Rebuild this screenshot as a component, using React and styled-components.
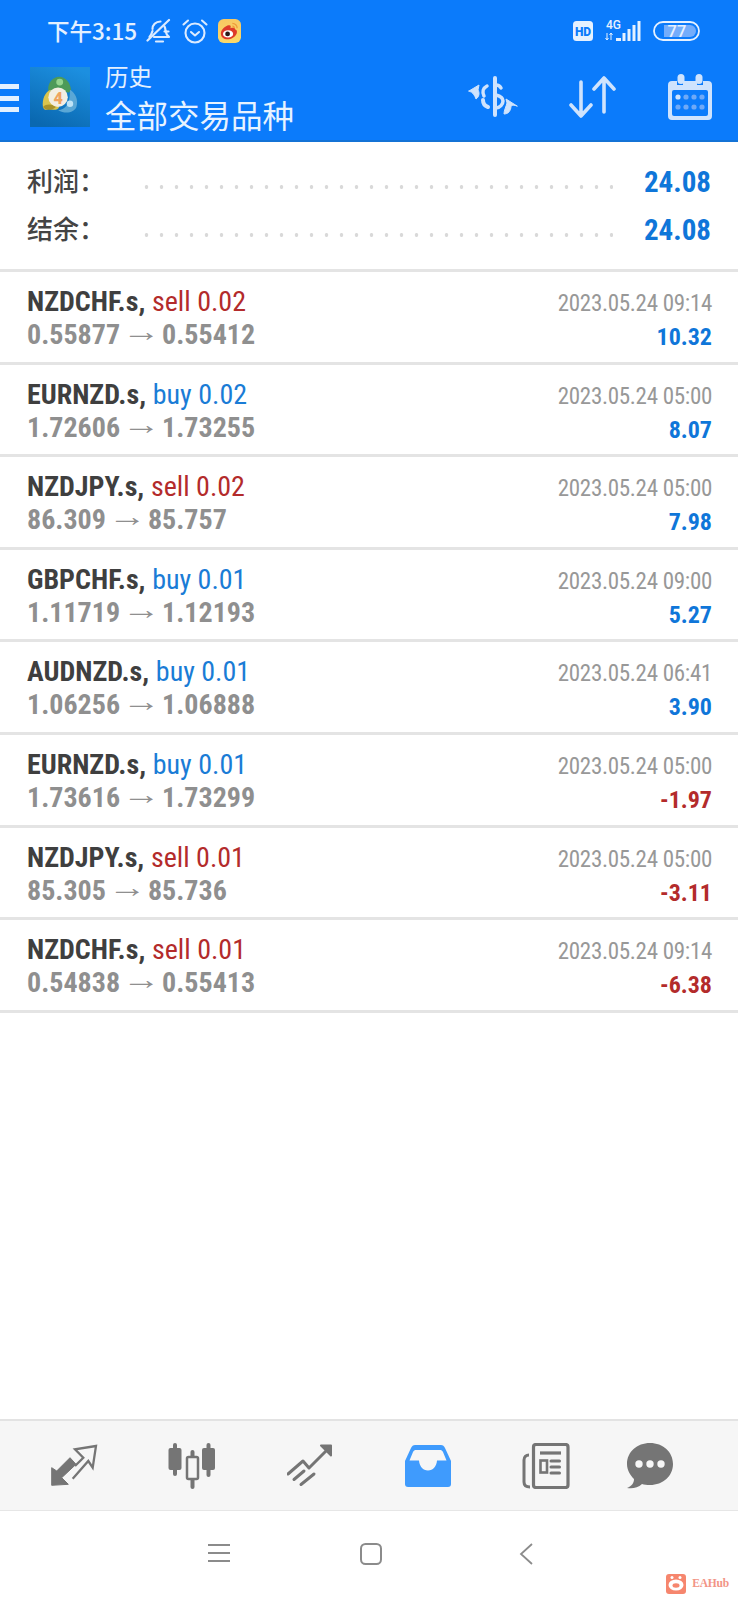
import React from "react";
import styled, { createGlobalStyle } from "styled-components";

const Global = createGlobalStyle`
  html, body { margin: 0; padding: 0; background: #fff; }
  #root { width: 738px; height: 1600px; }
`;
const CJK = `"Noto Sans CJK SC", Roboto, sans-serif`;
const RC = `Roboto, "Noto Sans CJK SC", sans-serif`;

const Page = styled.div`
  width: 738px; height: 1600px; display: flex; flex-direction: column; overflow: hidden; background: #fff;
`;
const Header = styled.header`
  background: #0b7bfb; height: 142px; flex: none; display: flex; flex-direction: column;
  border-bottom: 2px solid #1473d6; box-sizing: border-box; color: #fff;
`;
const Status = styled.div`
  height: 61px; flex: none; display: flex; align-items: center; padding: 0 38px 0 47px;
`;
const Time = styled.span`
  font: 500 22.5px/1 ${CJK}; color: #e3f0ff; margin-right: 9px;
`;
const StatusGroup = styled.div`
  display: flex; align-items: center; gap: ${p => p.$gap || 10}px;
`;
const Spacer = styled.div`flex: 1;`;
const Toolbar = styled.div`
  flex: 1; display: flex; align-items: center; padding-bottom: 9px;
`;
const Burger = styled.div`
  width: 19px; height: 28px; display: flex; flex-direction: column; justify-content: space-between; margin-right: 11px; margin-top: 2px;
  i { display: block; height: 5px; background: #e3f0ff; }
`;
const Titles = styled.div`
  margin-left: 15px; display: flex; flex-direction: column; gap: 4px;
`;
const Sub = styled.div`font: 400 23.5px/30px ${CJK}; color: #e3f0ff;`;
const Title = styled.div`font: 400 31.5px/38px ${CJK}; color: #e8f3ff;`;
const Actions = styled.div`
  margin-left: auto; display: flex; align-items: center; gap: 51px; padding-right: 26px;
`;

const Summary = styled.section`
  flex: none; height: 130px; box-sizing: border-box; padding: 20px 27px 0; border-bottom: 3px solid #e4e4e4; display: flex; flex-direction: column; gap: 8px;
`;
const SumRow = styled.div`
  height: 40px; display: flex; align-items: center;
`;
const SumLabel = styled.span`
  font: 500 26px/1 ${CJK}; color: #444; width: 117px; margin-right: -5px; margin-top: -4px; flex: none; white-space: nowrap;
`;
const Dots = styled.div`
  width: 474px; height: 4px; flex: none; margin-top: 9px;
  background-image: radial-gradient(circle, #d9d9d9 1.6px, transparent 2.1px);
  background-size: 15px 4px; background-repeat: repeat-x;
`;
const SumValue = styled.span`
  margin-left: auto; font: 700 29px/1 ${RC}; color: #0f76d9; font-stretch: 87%;
`;

const Row = styled.div`
  height: 92.6px; flex: none; box-sizing: border-box; border-bottom: 3px solid #e4e4e4;
  padding: 13px 26px 0 27px; display: flex; justify-content: space-between;
`;
const Col = styled.div`
  display: flex; flex-direction: column; align-items: ${p => p.$right ? "flex-end" : "flex-start"};
  margin-top: ${p => p.$right ? 2 : 0}px; gap: ${p => p.$right ? 1 : 0}px;
`;
const Line = styled.div`
  height: 33px; white-space: nowrap; font-family: ${RC}; font-stretch: 75%; line-height: 33px;
`;
const Symbol = styled.span`font-weight: 700; font-size: 28px; color: #3f3f3f; margin-right: 3px;`;
const Side = styled.span`
  font-weight: 400; font-size: 28px; color: ${p => p.$sell ? "#b32b2b" : "#1a7cd6"};
`;
const Price = styled.span`font-weight: 700; font-size: 28px; color: #8f8f8f;`;
const Arrow = styled.span`
  display: inline-block; font: 700 28px/1 "Liberation Sans", sans-serif; color: #8f8f8f;
  margin: 0 7px; transform: scaleX(1.38); vertical-align: 3px;
`;
const DateText = styled.span`font-weight: 400; font-size: 23px; letter-spacing: -0.3px; color: #989898;`;
const Profit = styled.span`
  font-weight: 700; font-size: 24px; color: ${p => p.$neg ? "#b32b2b" : "#0f76d9"};
`;

const Fill = styled.div`flex: 1;`;
const BottomNav = styled.nav`
  flex: none; height: 92px; box-sizing: border-box; background: #f6f6f6;
  border-top: 2px solid #e3e3e3; border-bottom: 1px solid #e6e6e6;
  display: flex; align-items: center; padding-left: 15px;
`;
const Slot = styled.div`
  width: ${p => p.$w || 118}px; flex: none; display: flex; justify-content: center; align-items: center; margin-left: ${p => p.$shift || 0}px;
`;
const SysNav = styled.div`
  flex: none; height: 89px; position: relative; display: flex; padding-left: 208px; align-items: flex-start;
  gap: 0; padding-top: 32px; box-sizing: border-box;
`;
const SysIcon = styled.div`
  width: ${p => p.$w}px; display: flex;
`;
const Mark = styled.div`
  position: absolute; right: 9px; bottom: 6px; display: flex; align-items: center; gap: 6px;
  font: 700 11.5px/1 "Liberation Serif", serif; letter-spacing: -0.2px; color: #f29486;
`;

const trades = [
  ["NZDCHF.s", "sell", "0.02", "0.55877", "0.55412", "2023.05.24 09:14", "10.32"],
  ["EURNZD.s", "buy", "0.02", "1.72606", "1.73255", "2023.05.24 05:00", "8.07"],
  ["NZDJPY.s", "sell", "0.02", "86.309", "85.757", "2023.05.24 05:00", "7.98"],
  ["GBPCHF.s", "buy", "0.01", "1.11719", "1.12193", "2023.05.24 09:00", "5.27"],
  ["AUDNZD.s", "buy", "0.01", "1.06256", "1.06888", "2023.05.24 06:41", "3.90"],
  ["EURNZD.s", "buy", "0.01", "1.73616", "1.73299", "2023.05.24 05:00", "-1.97"],
  ["NZDJPY.s", "sell", "0.01", "85.305", "85.736", "2023.05.24 05:00", "-3.11"],
  ["NZDCHF.s", "sell", "0.01", "0.54838", "0.55413", "2023.05.24 09:14", "-6.38"],
];

const BellOff = () => (
  <svg width="26" height="26" viewBox="0 0 26 26" fill="none" stroke="#dcebff" strokeWidth="2.200" strokeLinecap="round" strokeLinejoin="round">
    <path d="M8 19h15c-2-1.500-3-3.500-3.500-6.500 0-1.500-.5-3-1-4" />
    <path d="M18.500 13.500l4 0M6.500 13c-.5 2-1.500 4-3 6" />
    <path d="M6.500 11c0-4 3-7.500 8-7.500" />
    <path d="M10 23.500h7" /><path d="M1.500 22.500L23 2" />
  </svg>
);
const Alarm = () => (
  <svg width="26" height="26" viewBox="0 0 26 26" fill="none" stroke="#dcebff" strokeWidth="2.100" strokeLinecap="round" strokeLinejoin="round">
    <circle cx="13" cy="15" r="9.500" /><path d="M9 14l4 3.500 4-3.500" /><path d="M1.500 6.500L6 2.500" /><path d="M24.500 6.500L20 2.500" />
  </svg>
);
const Weibo = () => (
  <svg width="23" height="24" viewBox="0 0 24 25">
    <defs>
      <linearGradient id="wb" x1="0" y1="0" x2="0" y2="1"><stop offset="0" stopColor="#f8c862" /><stop offset="1" stopColor="#fad96a" /></linearGradient>
    </defs>
    <rect width="24" height="25" rx="6" fill="url(#wb)" />
    <path d="M3 15c0-4 5-8 8-8.500 2.500-.5 2.500 1 2 3 3-1 5-.5 5 1.500 2 .5 2 2.500 1.500 4-1.500 4-6 6-9.500 6-4 0-7-2-7-6z" fill="#dd3a2a" />
    <ellipse cx="10.500" cy="15.500" rx="5.300" ry="3.800" fill="#fff" />
    <circle cx="10" cy="15.500" r="2.500" fill="#2a1a18" />
    <path d="M15 4.500a5 5 0 0 1 5 5M15 7.500a2 2 0 0 1 2 2" stroke="#ee9a3a" strokeWidth="1.300" fill="none" />
  </svg>
);
const HD = () => (
  <svg width="20" height="20" viewBox="0 0 20 20">
    <rect width="20" height="20" rx="3.500" fill="#e6f1ff" />
    <text x="10" y="14.500" textAnchor="middle" fontFamily="Roboto, sans-serif" fontWeight="900" fontSize="12" fill="#0b7bfb">HD</text>
  </svg>
);
const Signal = () => (
  <svg width="38" height="30" viewBox="0 -4 38 30">
    <text x="2" y="9" fontFamily="Roboto, sans-serif" fontSize="12" fontWeight="500" fill="#e6f1ff">4G</text>
    <path d="M3 13v7M1.500 18l1.500 2 1.500-2M7 20v-7M5.500 15l1.500-2 1.500 2" stroke="#e6f1ff" strokeWidth="1" fill="none" />
    <rect x="12" y="18" width="5" height="3" fill="#e6f1ff" />
    <rect x="18.500" y="13" width="3" height="8" fill="#e6f1ff" />
    <rect x="23.500" y="9" width="3" height="12" fill="#e6f1ff" />
    <rect x="28.500" y="5" width="3" height="16" fill="#e6f1ff" />
    <rect x="33.500" y="1" width="3" height="20" fill="#e6f1ff" />
  </svg>
);
const Battery = () => (
  <svg width="47" height="20" viewBox="0 0 47 20">
    <rect x="1" y="1" width="45" height="18" rx="9" fill="none" stroke="#e6f1ff" strokeWidth="1.800" />
    <path d="M11 4h26a6 6 0 0 1 0 12H11z" fill="#74adfb" />
    <text x="24" y="16" textAnchor="middle" fontFamily="Roboto, sans-serif" fontWeight="500" fontSize="16.500" fill="#e6f1ff">77</text>
  </svg>
);
const Logo = () => (
  <svg width="60" height="60" viewBox="0 0 60 60">
    <defs>
      <linearGradient id="mtbg" x1="0.700" y1="0" x2="0.300" y2="1">
        <stop offset="0" stopColor="#1c8fe0" /><stop offset="1" stopColor="#0a68b0" />
      </linearGradient>
    </defs>
    <rect width="60" height="60" fill="url(#mtbg)" />
    <g transform="scale(1.08)">
      <path d="M17 22c-1-7 4-13 10-13s11 6 11 13c-2 2-3 2-5 1-4-2-8-2-11 0-2 1-4 1-5-1z" fill="#4d9a58" />
      <circle cx="27.500" cy="14" r="3.200" fill="#93d48e" />
      <path d="M19 21c-5 2-8 9-7 16 1 3 3 3 5 2 5 1 9 1 10-2-6-3-8-9-8-16z" fill="#d9c44d" />
      <path d="M12 37c3-3 8-3 12 0-3 3-9 4-12 0z" fill="#a8922a" />
      <path d="M37 21c5 3 8 9 6 16-2 5-10 7-17 3 7-1 11-5 11-19z" fill="#5aa7d6" />
      <circle cx="37" cy="34" r="3" fill="#bfe3f7" />
      <circle cx="26" cy="28" r="9" fill="#f3eee2" />
      <text x="26" y="34" textAnchor="middle" fontFamily="Roboto, sans-serif" fontWeight="900" fontSize="15" fill="#efa45f">4</text>
    </g>
  </svg>
);
const tc = "#cfe3fd";
const SwapDollar = () => (
  <svg width="50" height="42" viewBox="0 0 50 42" fill="none" stroke={tc} strokeLinecap="round">
    <path d="M27 2v37" strokeWidth="4" />
    <path d="M33 12c-1-2-3-3-5-3" strokeWidth="3.500" />
    <path d="M19 10c-4 2-5 6-3 10" strokeWidth="3.500" />
    <path d="M15 24c0 3 2 6 5 7" strokeWidth="4" />
    <path d="M28 19c4 1 7 3 7 6s-3 7-7 7" strokeWidth="3.500" />
    <path d="M1 15L11 9l-1 5c2 3 1 7-2 9-1-3-3-7-7-8z" fill={tc} stroke={tc} strokeWidth="1" />
    <path d="M49 30L38 23l1 4c-1 4-3 7-3 11 4 0 7-3 7-8 2-1 3-1 6 0z" fill={tc} stroke={tc} strokeWidth="1" />
  </svg>
);
const SortArrows = () => (
  <svg width="48" height="42" viewBox="0 0 48 42" fill="none" stroke={tc} strokeWidth="3.600" strokeLinecap="round" strokeLinejoin="round">
    <path d="M12 6v34M2 29l10 11 10-11" /><path d="M35 36V2M25 13L35 2l10 11" />
  </svg>
);
const Calendar = () => (
  <svg width="44" height="46" viewBox="0 0 44 46">
    <path d="M4 7h5v4h6V7h14v4h6V7h5a4 4 0 0 1 4 4v31a4 4 0 0 1-4 4H4a4 4 0 0 1-4-4V11a4 4 0 0 1 4-4z" fill={tc} />
    <rect x="9.500" y="0" width="7" height="10" rx="3.500" fill={tc} />
    <rect x="27.500" y="0" width="7" height="10" rx="3.500" fill={tc} />
    <rect x="4" y="16" width="36" height="26" rx="2" fill="#0b7bfb" />
    {[0, 1, 2, 3].map(i => <circle key={i} cx={10 + i * 8} cy="23" r="2.600" fill={i === 0 ? tc : "#6fa9f7"} />)}
    {[0, 1, 2, 3].map(i => <circle key={i} cx={10 + i * 8} cy="33" r="2.600" fill="#6fa9f7" />)}
  </svg>
);

const g = "#757575";
const TradeIcon = () => (
  <svg width="48" height="44" viewBox="0 0 48 44" fill="none">
    <path d="M1.700 41.300V23.700l5 3.300L20 13.700l6 6.600-14.300 13.400 6.600 6.600z" fill={g} stroke={g} strokeLinejoin="round" />
    <path d="M25 22l8.300-8.300L25 5.300 46 2l-3.300 21.700-4.400-6.700-15.600 17.700" stroke={g} strokeWidth="2.300" strokeLinejoin="miter" />
  </svg>
);
const CandleIcon = () => (
  <svg width="48" height="46" viewBox="0 0 48 46">
    <rect x="5" y="0" width="4" height="33" rx="2" fill={g} />
    <rect x="0.500" y="5" width="13" height="22" rx="2" fill={g} />
    <rect x="38.500" y="0" width="4" height="34" rx="2" fill={g} />
    <rect x="34" y="5" width="13" height="22" rx="2" fill={g} />
    <rect x="22.500" y="7" width="4" height="39" rx="2" fill={g} />
    <rect x="19" y="14" width="11" height="22" rx="1.500" fill="#f6f6f6" stroke={g} strokeWidth="2.500" />
  </svg>
);
const ChartIcon = () => (
  <svg width="46" height="44" viewBox="0 0 46 44" fill="none" stroke={g} strokeWidth="3" strokeLinecap="round" strokeLinejoin="round">
    <path d="M1 30L16 17l6 7L40 6" />
    <path d="M34 1.500h10v10z" fill={g} strokeWidth="2" />
    <path d="M7 35.500l10-8.500" /><path d="M14 40.500L27 30" />
  </svg>
);
const InboxIcon = () => (
  <svg width="46" height="42" viewBox="0 0 46 42">
    <path d="M10 0h26c2 0 3 1 4 3l6 13v23a3 3 0 0 1-3 3H3a3 3 0 0 1-3-3V16L6 3c1-2 2-3 4-3z" fill="#3f9bfd" />
    <path d="M11 5h24c1.500 0 2 .5 3 2l3.500 8.500H32c-.5 6-4 10-9 10s-8.500-4-9-10H4.500L8 7c1-1.500 1.500-2 3-2z" fill="#f6f6f6" />
  </svg>
);
const NewsIcon = () => (
  <svg width="48" height="46" viewBox="0 0 48 46" fill="none" stroke={g}>
    <rect x="11.500" y="1.500" width="34.500" height="43" rx="2.500" strokeWidth="3.200" />
    <path d="M7 12C4 12 2 14 2 17v22c0 3 2 5 6 5" strokeWidth="3" />
    <path d="M18 10h21" strokeWidth="3.200" />
    <rect x="18.500" y="17.500" width="6.500" height="12" strokeWidth="2.600" />
    <path d="M29 18h8.500M29 24h8.500M29 30h8.500" strokeWidth="3" strokeLinecap="round" />
  </svg>
);
const ChatIcon = () => (
  <svg width="46" height="46" viewBox="0 0 46 46">
    <path d="M23 0C10 0 0 9 0 21c0 6 3 11 7 15 0 4-2 7-7 9 5 1 11 0 15-4 2 .7 5 1 8 1 13 0 23-9 23-21S36 0 23 0z" fill={g} />
    <circle cx="12" cy="21" r="3.700" fill="#f6f6f6" /><circle cx="23" cy="21" r="3.700" fill="#f6f6f6" /><circle cx="34" cy="21" r="3.700" fill="#f6f6f6" />
  </svg>
);
const s = "#8b8b8b";
const MenuKey = () => (
  <svg width="22" height="20" viewBox="0 0 22 20" stroke={s} strokeWidth="1.800"><path d="M0 2h22M0 10h22M0 18h22" /></svg>
);
const HomeKey = () => (
  <svg width="22" height="22" viewBox="0 0 22 22" fill="none" stroke={s} strokeWidth="2"><rect x="1" y="1" width="20" height="20" rx="4.500" /></svg>
);
const BackKey = () => (
  <svg width="14" height="22" viewBox="0 0 14 22" fill="none" stroke={s} strokeWidth="1.800"><path d="M13 1L2 11l11 10" /></svg>
);
const Pig = () => (
  <svg width="20" height="20" viewBox="0 0 20 20">
    <rect width="20" height="20" rx="3" fill="#f6866e" />
    <circle cx="6" cy="3.500" r="1.500" fill="#fff" /><circle cx="14" cy="3.500" r="1.500" fill="#fff" />
    <ellipse cx="10" cy="11" rx="7.500" ry="5.500" fill="#fff" />
    <ellipse cx="10" cy="11.500" rx="3.500" ry="2.200" fill="#f6866e" />
  </svg>
);

export default function App() {
  return (
    <Page>
      <Global />
      <Header>
        <Status>
          <Time>下午3:15</Time>
          <StatusGroup><BellOff /><Alarm /><Weibo /></StatusGroup>
          <Spacer />
          <StatusGroup $gap={11}><HD /><Signal /><Battery /></StatusGroup>
        </Status>
        <Toolbar>
          <Burger><i /><i /><i /></Burger>
          <Logo />
          <Titles><Sub>历史</Sub><Title>全部交易品种</Title></Titles>
          <Actions><SwapDollar /><SortArrows /><Calendar /></Actions>
        </Toolbar>
      </Header>
      <Summary>
        <SumRow><SumLabel>利润：</SumLabel><Dots /><SumValue>24.08</SumValue></SumRow>
        <SumRow><SumLabel>结余：</SumLabel><Dots /><SumValue>24.08</SumValue></SumRow>
      </Summary>
      {trades.map((t, i) => (
        <Row key={i}>
          <Col>
            <Line><Symbol>{t[0]},</Symbol> <Side $sell={t[1] === "sell"}>{t[1]} {t[2]}</Side></Line>
            <Line><Price>{t[3]}</Price><Arrow>→</Arrow><Price>{t[4]}</Price></Line>
          </Col>
          <Col $right>
            <Line><DateText>{t[5]}</DateText></Line>
            <Line><Profit $neg={t[6].startsWith("-")}>{t[6]}</Profit></Line>
          </Col>
        </Row>
      ))}
      <Fill />
      <BottomNav>
        <Slot><TradeIcon /></Slot>
        <Slot><CandleIcon /></Slot>
        <Slot><ChartIcon /></Slot>
        <Slot><InboxIcon /></Slot>
        <Slot><NewsIcon /></Slot>
        <Slot $shift={-14}><ChatIcon /></Slot>
      </BottomNav>
      <SysNav>
        <SysIcon $w={152}><MenuKey /></SysIcon>
        <SysIcon $w={159}><HomeKey /></SysIcon>
        <SysIcon $w={20}><BackKey /></SysIcon>
        <Mark><Pig />EAHub</Mark>
      </SysNav>
    </Page>
  );
}
